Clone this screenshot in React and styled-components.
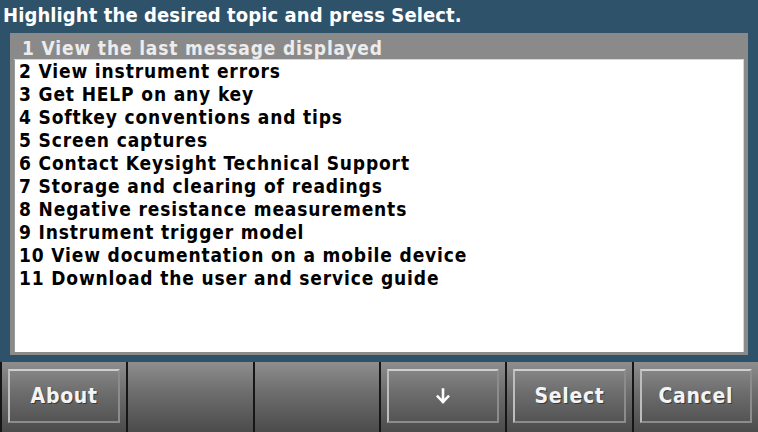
import styled, { createGlobalStyle, css } from "styled-components";

const GlobalStyle = createGlobalStyle`
  html, body {
    margin: 0;
    padding: 0;
    background: #2f526b;
  }
  body {
    font-family: "DejaVu Sans", "Liberation Sans", sans-serif;
    font-stretch: condensed;
    font-weight: bold;
  }
`;

const Screen = styled.div`
  width: 758px;
  height: 432px;
  display: flex;
  flex-direction: column;
  background: #2f526b;
  overflow: hidden;
`;

const Title = styled.div`
  height: 33px;
  padding-left: 3px;
  color: #ffffff;
  font-size: 20px;
  line-height: 31px;
  letter-spacing: 0.1px;
  white-space: nowrap;
`;

const ListFrame = styled.div`
  flex: 1;
  margin: 0 10px 7px 10px;
  background: #ffffff;
  border: solid #8a8a8a;
  border-width: 4px 4px 3px 4px;
  box-shadow: inset -1px 0 0 #d6d6d6, inset 1px 0 0 #9a9a9a;
`;

const Row = styled.div`
  height: 23px;
  padding-left: 5px;
  font-size: 19px;
  line-height: 23px;
  letter-spacing: 0.85px;
  color: #000000;
  white-space: nowrap;

  ${(p) =>
    p.$active &&
    css`
      padding-left: 8px;
      background: #8a8a8a;
      color: #ececec;
      border-bottom: 1px solid #d6d6d6;
      box-sizing: border-box;
    `}
`;

const SoftkeyBar = styled.div`
  height: 70px;
  display: grid;
  grid-template-columns: repeat(6, 1fr);
  background: #141414;
`;

const Softkey = styled.div`
  border-left: 2px solid #161616;
  background: linear-gradient(#8e8e8e 0%, #6c6c6c 45%, #4b4b4b 100%);
  display: flex;
`;

const KeyFrame = styled.div`
  flex: 1;
  margin: 7px 6px 9px 6px;
  border: 2px solid;
  border-color: #cfcfcf #8c8c8c #8c8c8c #bdbdbd;
  display: flex;
  align-items: center;
  justify-content: center;
  color: #f4f4f4;
  font-size: 21px;
  letter-spacing: 0.7px;
  text-shadow: 1px 1px 0 #3a3a3a;
`;

const ArrowDown = () => (
  <svg width="14" height="16" viewBox="0 0 14 16">
    <path
      d="M7 1.5 V14 M1.8 8.6 L7 14 L12.2 8.6"
      fill="none"
      stroke="#ffffff"
      strokeWidth="2.6"
      strokeLinecap="square"
    />
  </svg>
);

const topics = [
  "1 View the last message displayed",
  "2 View instrument errors",
  "3 Get HELP on any key",
  "4 Softkey conventions and tips",
  "5 Screen captures",
  "6 Contact Keysight Technical Support",
  "7 Storage and clearing of readings",
  "8 Negative resistance measurements",
  "9 Instrument trigger model",
  "10 View documentation on a mobile device",
  "11 Download the user and service guide",
];

const keys = ["About", null, null, "down", "Select", "Cancel"];

export default function App() {
  return (
    <>
      <GlobalStyle />
      <Screen>
        <Title>Highlight the desired topic and press Select.</Title>
        <ListFrame>
          {topics.map((t, i) => (
            <Row key={t} $active={i === 0}>
              {t}
            </Row>
          ))}
        </ListFrame>
        <SoftkeyBar>
          {keys.map((k, i) => (
            <Softkey key={i}>
              {k && <KeyFrame>{k === "down" ? <ArrowDown /> : k}</KeyFrame>}
            </Softkey>
          ))}
        </SoftkeyBar>
      </Screen>
    </>
  );
}
